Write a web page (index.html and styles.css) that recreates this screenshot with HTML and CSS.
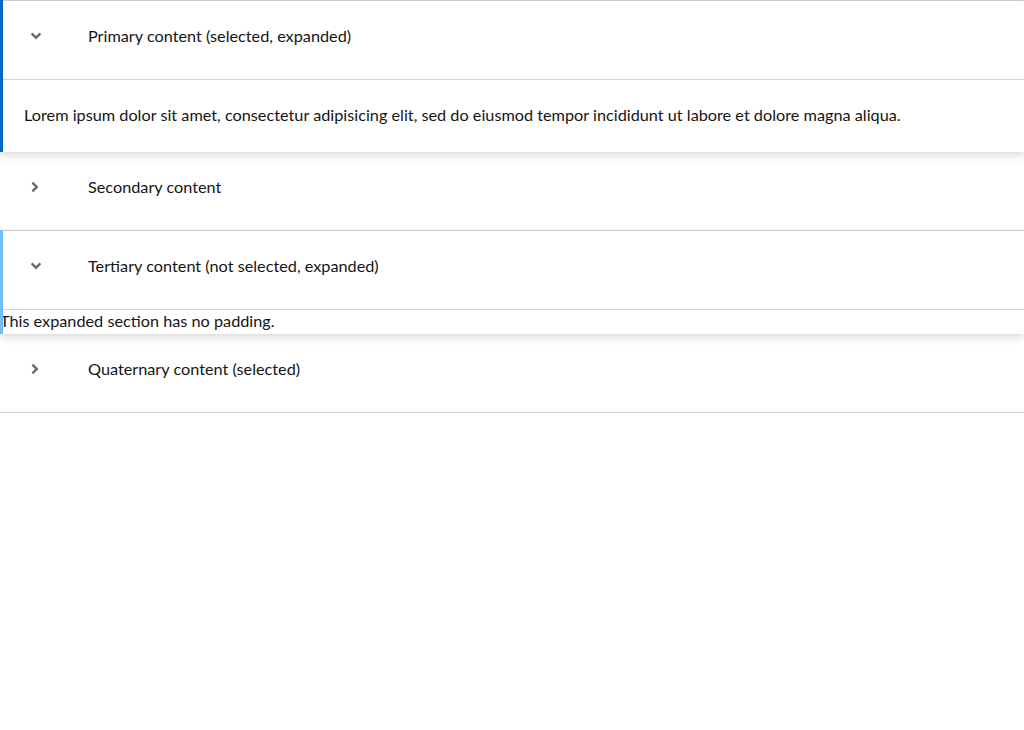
FILE: index.html
```html
<!DOCTYPE html>
<html lang="en">
<head>
<meta charset="utf-8">
<title>Data list</title>
<link rel="stylesheet" href="styles.css">
</head>
<body>
<ul class="data-list">
  <li class="item expanded selected">
    <div class="row">
      <span class="toggle">
        <svg class="icon-down" viewBox="0 0 320 512" aria-hidden="true"><path d="M143 352.3L7 216.3c-9.4-9.4-9.4-24.6 0-33.9l22.6-22.6c9.4-9.4 24.6-9.4 33.9 0l96.4 96.4 96.4-96.4c9.4-9.4 24.6-9.4 33.9 0l22.6 22.6c9.4 9.4 9.4 24.6 0 33.9l-136 136c-9.2 9.4-24.4 9.4-33.8 0z"/></svg>
      </span>
      <span class="cell">Primary content (selected, expanded)</span>
    </div>
    <section class="content">Lorem ipsum dolor sit amet, consectetur adipisicing elit, sed do eiusmod tempor incididunt ut labore et dolore magna aliqua.</section>
  </li>
  <li class="item">
    <div class="row">
      <span class="toggle">
        <svg class="icon-right" viewBox="0 0 256 512" aria-hidden="true"><path d="M224.3 273l-136 136c-9.4 9.4-24.6 9.4-33.9 0l-22.6-22.6c-9.4-9.4-9.4-24.6 0-33.9l96.4-96.4-96.4-96.4c-9.4-9.4-9.4-24.6 0-33.9L54.3 103c9.4-9.4 24.6-9.4 33.9 0l136 136c9.5 9.4 9.5 24.6.1 34z"/></svg>
      </span>
      <span class="cell">Secondary content</span>
    </div>
  </li>
  <li class="item expanded">
    <div class="row">
      <span class="toggle">
        <svg class="icon-down" viewBox="0 0 320 512" aria-hidden="true"><path d="M143 352.3L7 216.3c-9.4-9.4-9.4-24.6 0-33.9l22.6-22.6c9.4-9.4 24.6-9.4 33.9 0l96.4 96.4 96.4-96.4c9.4-9.4 24.6-9.4 33.9 0l22.6 22.6c9.4 9.4 9.4 24.6 0 33.9l-136 136c-9.2 9.4-24.4 9.4-33.8 0z"/></svg>
      </span>
      <span class="cell">Tertiary content (not selected, expanded)</span>
    </div>
    <section class="content no-padding">This expanded section has no padding.</section>
  </li>
  <li class="item">
    <div class="row">
      <span class="toggle">
        <svg class="icon-right" viewBox="0 0 256 512" aria-hidden="true"><path d="M224.3 273l-136 136c-9.4 9.4-24.6 9.4-33.9 0l-22.6-22.6c-9.4-9.4-9.4-24.6 0-33.9l96.4-96.4-96.4-96.4c-9.4-9.4-9.4-24.6 0-33.9L54.3 103c9.4-9.4 24.6-9.4 33.9 0l136 136c9.5 9.4 9.5 24.6.1 34z"/></svg>
      </span>
      <span class="cell">Quaternary content (selected)</span>
    </div>
  </li>
</ul>
</body>
</html>
```

FILE: styles.css
```css
html, body {
  margin: 0;
  padding: 0;
  background: #fff;
}
body {
  font-family: "Lato", "Liberation Sans", sans-serif;
  font-size: 16.25px;
  line-height: 24px;
  color: #151515;
}
.data-list {
  list-style: none;
  margin: 0;
  padding: 0;
  border-top: 1px solid #d2d2d2;
}
.item {
  position: relative;
  background: #fff;
}
.item.expanded {
  z-index: 1;
  box-shadow: 0 4px 8px 0 rgba(3, 3, 3, 0.12), 0 0 4px 0 rgba(3, 3, 3, 0.06);
}
.item.expanded::before {
  content: "";
  position: absolute;
  left: 0;
  top: -1px;
  bottom: 0;
  width: 3px;
  background: #73bcf7;
  z-index: 2;
}
.item.expanded.selected::before {
  background: #0066cc;
}
.row {
  display: flex;
  align-items: center;
  box-sizing: content-box;
  height: 70px;
  padding-bottom: 8px;
  border-bottom: 1px solid #d2d2d2;
}
.toggle {
  display: flex;
  align-items: center;
  width: 10px;
  margin-left: 31px;
  margin-right: 47px;
  fill: #6a6e73;
}
.icon-down {
  width: 10px;
  height: 16px;
  display: block;
}
.icon-right {
  width: 8px;
  height: 16px;
  display: block;
}
.content {
  padding: 23px 24px 25px;
}
.content.no-padding {
  padding: 0;
}
.content.no-padding {
  line-height: 22px;
  padding-bottom: 2px;
}
```
